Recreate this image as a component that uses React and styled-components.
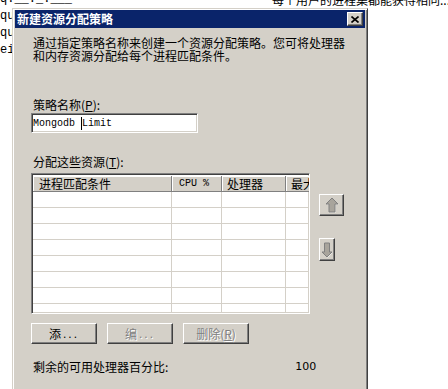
import React from 'react'
import styled, { createGlobalStyle } from 'styled-components'

const GlobalStyle = createGlobalStyle`
  html, body {
    margin: 0;
    padding: 0;
    background: #ffffff;
    overflow: hidden;
  }
`

const cjk = `"Noto Sans CJK SC", "Liberation Sans", sans-serif`
const mono = `"Liberation Mono", "DejaVu Sans Mono", monospace`

const Page = styled.div`
  position: relative;
  width: 448px;
  height: 389px;
  overflow: hidden;
  background: #ffffff;
`

const Backdrop = styled.div`
  margin-top: -9px;
  font-family: ${mono};
  font-size: 12px;
  line-height: 17px;
  color: #000;
`

const BackLine = styled.div`
  display: flex;
  white-space: nowrap;
`

const BackRight = styled.span`
  margin-left: ${(p) => p.offset}px;
  font-family: ${cjk};
`

const Dialog = styled.div`
  position: absolute;
  left: 12px;
  top: 8px;
  width: 350px;
  height: 400px;
  padding: 1px 2px 2px 2px;
  background: #d4d0c8;
  border: 1px solid;
  border-color: #d4d0c8 #404040 #404040 #d4d0c8;
  box-shadow: inset 1px 1px #ffffff, inset -1px -1px #808080;
`

const TitleBar = styled.div`
  height: 18px;
  display: flex;
  align-items: center;
  justify-content: space-between;
  padding: 0 2px;
  background: #0a246a;
`

const Title = styled.span`
  font-family: ${cjk};
  font-weight: 700;
  font-size: 12px;
  line-height: 14px;
  color: #ffffff;
`

const CloseButton = styled.div`
  box-sizing: border-box;
  width: 16px;
  height: 14px;
  display: flex;
  align-items: center;
  justify-content: center;
  background: #d4d0c8;
  border: 1px solid;
  border-color: #ffffff #404040 #404040 #ffffff;
  box-shadow: inset -1px -1px #808080;
`

const Body = styled.div`
  padding: 0 0 0 16px;
  font-family: ${cjk};
  font-size: 12px;
  color: #000;
`

const Description = styled.p`
  margin: 8px 0 0 2px;
  line-height: 13px;
`

const Label = styled.div`
  margin: ${(p) => p.top}px 0 0 2px;
  line-height: 13px;
  white-space: nowrap;
`

const Key = styled.span`
  text-decoration: underline;
`

const TextBox = styled.div`
  box-sizing: border-box;
  margin-top: 2px;
  width: 167px;
  height: 20px;
  display: flex;
  align-items: center;
  padding-left: 1px;
  background: #ffffff;
  border: 1px solid;
  border-color: #808080 #ffffff #ffffff #808080;
  box-shadow: inset 1px 1px #404040, inset -1px -1px #d4d0c8;
  font-family: ${mono};
  font-size: 10px;
  white-space: pre;
`

const Caret = styled.span`
  display: inline-block;
  width: 1px;
  height: 13px;
  background: #000;
`

const ListArea = styled.div`
  display: flex;
  gap: 9px;
  margin-top: 5px;
`

const ListView = styled.div`
  box-sizing: border-box;
  width: 279px;
  height: 141px;
  overflow: hidden;
  background: #ffffff;
  border: 1px solid;
  border-color: #808080 #ffffff #ffffff #808080;
  box-shadow: inset 1px 1px #404040, inset -1px -1px #d4d0c8;
  padding: 2px 0 0 1px;
`

const Grid = styled.div`
  display: grid;
  grid-template-columns: 139px 50px 64px 40px;
  grid-auto-rows: 16px;
`

const HeaderCell = styled.div`
  box-sizing: border-box;
  height: 16px;
  display: flex;
  align-items: center;
  padding-left: ${(p) => p.pad}px;
  background: #d4d0c8;
  border-right: 1px solid #808080;
  border-bottom: 1px solid #808080;
  box-shadow: inset 1px 1px #ffffff;
  font-family: ${(p) => (p.mono ? mono : cjk)};
  font-size: ${(p) => (p.mono ? 10 : 12)}px;
  line-height: 14px;
  white-space: nowrap;
  overflow: hidden;
`

const Cell = styled.div`
  box-sizing: border-box;
  border-right: 1px solid #d4d0c8;
  border-bottom: 1px solid #d4d0c8;
`

const SideButtons = styled.div`
  display: flex;
  flex-direction: column;
  align-items: flex-start;
  padding-top: 21px;
  gap: 22px;
`

const ArrowButton = styled.div`
  box-sizing: border-box;
  width: ${(p) => p.w}px;
  height: ${(p) => p.h}px;
  display: flex;
  align-items: center;
  justify-content: center;
  background: #d4d0c8;
  border: 1px solid;
  border-color: #ffffff #404040 #404040 #ffffff;
  box-shadow: inset -1px -1px #808080;
`

const ButtonRow = styled.div`
  display: flex;
  gap: 10px;
  margin-top: 9px;
`

const PushButton = styled.div`
  box-sizing: border-box;
  width: ${(p) => p.w}px;
  height: 21px;
  display: flex;
  align-items: center;
  justify-content: center;
  background: #d4d0c8;
  border: 1px solid;
  border-color: #ffffff #404040 #404040 #ffffff;
  box-shadow: inset -1px -1px #808080;
  line-height: 14px;
  color: ${(p) => (p.disabled ? '#808080' : '#000')};
  text-shadow: ${(p) => (p.disabled ? '1px 1px #ffffff' : 'none')};
  white-space: nowrap;
`

const Dots = styled.span`
  font-family: "Liberation Sans", sans-serif;
  letter-spacing: 2px;
  margin-left: 2px;
`

const Summary = styled.div`
  display: flex;
  margin: 16px 0 0 2px;
  line-height: 13px;
`

const SummaryValue = styled.span`
  margin-left: 127px;
  font-family: "DejaVu Sans", "Liberation Sans", sans-serif;
  font-size: 11px;
`

const UpArrow = () => (
  <svg width="14" height="16" viewBox="0 0 14 16">
    <path d="M7.5 1.5 L13.5 7.5 L10.5 7.5 L10.5 15.5 L4.5 15.5 L4.5 7.5 L1.5 7.5 Z" fill="#ffffff" />
    <path d="M7 1 L13 7 L10 7 L10 15 L4 15 L4 7 L1 7 Z" fill="#a8a49c" stroke="#808080" strokeWidth="1" />
  </svg>
)

const DownArrow = () => (
  <svg width="12" height="16" viewBox="0 0 12 16">
    <path d="M6.5 15.5 L11.5 10.5 L9 10.5 L9 1.5 L4 1.5 L4 10.5 L1.5 10.5 Z" fill="#ffffff" />
    <path d="M6 15 L11 10 L8.5 10 L8.5 1 L3.5 1 L3.5 10 L1 10 Z" fill="#a8a49c" stroke="#808080" strokeWidth="1" />
  </svg>
)

const CloseGlyph = () => (
  <svg width="8" height="7" viewBox="0 0 8 7">
    <path d="M0.5 0.5 L7.5 6.5 M7.5 0.5 L0.5 6.5" stroke="#000" strokeWidth="1.6" />
  </svg>
)

const columns = [
  { name: '进程匹配条件', pad: 6 },
  { name: 'CPU %', pad: 7, mono: true },
  { name: '处理器', pad: 5 },
  { name: '最大', pad: 5 },
]

const rowCount = 8

const App = () => (
  <Page>
    <GlobalStyle />
    <Backdrop>
      <BackLine>
        <span>q.__._.___</span>
        <BackRight offset={200}>每个用户的进程集都能获得相同...</BackRight>
      </BackLine>
      <BackLine>qu</BackLine>
      <BackLine>qu</BackLine>
      <BackLine>ei</BackLine>
    </Backdrop>
    <Dialog>
      <TitleBar>
        <Title>新建资源分配策略</Title>
        <CloseButton>
          <CloseGlyph />
        </CloseButton>
      </TitleBar>
      <Body>
        <Description>
          通过指定策略名称来创建一个资源分配策略。您可将处理器
          <br />
          和内存资源分配给每个进程匹配条件。
        </Description>
        <Label top={36}>
          策略名称(<Key>P</Key>):
        </Label>
        <TextBox>
          Mongodb <Caret />Limit
        </TextBox>
        <Label top={22}>
          分配这些资源(<Key>T</Key>):
        </Label>
        <ListArea>
          <ListView>
            <Grid>
              {columns.map((c) => (
                <HeaderCell key={c.name} pad={c.pad} mono={c.mono}>
                  {c.name}
                </HeaderCell>
              ))}
              {Array.from({ length: rowCount * columns.length }, (_, i) => (
                <Cell key={i} />
              ))}
            </Grid>
          </ListView>
          <SideButtons>
            <ArrowButton w={25} h={22}>
              <UpArrow />
            </ArrowButton>
            <ArrowButton w={16} h={23}>
              <DownArrow />
            </ArrowButton>
          </SideButtons>
        </ListArea>
        <ButtonRow>
          <PushButton w={66}>
            添<Dots>...</Dots>
          </PushButton>
          <PushButton w={66} disabled>
            编<Dots>...</Dots>
          </PushButton>
          <PushButton w={66} disabled>
            删除(<Key>R</Key>)
          </PushButton>
        </ButtonRow>
        <Summary>
          <span>剩余的可用处理器百分比:</span>
          <SummaryValue>100</SummaryValue>
        </Summary>
      </Body>
    </Dialog>
  </Page>
)

export default App
